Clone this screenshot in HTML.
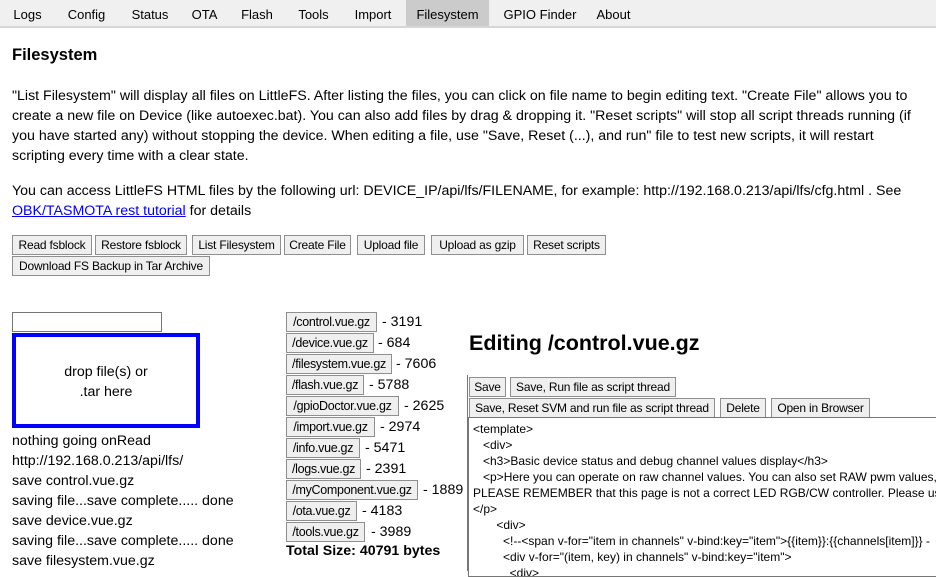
<!DOCTYPE html>
<html><head><meta charset="utf-8"><style>
*{box-sizing:border-box;margin:0;padding:0}
body{width:936px;height:571px;overflow:hidden;background:#fff;font-family:"Liberation Sans",sans-serif;color:#000;position:relative}
.a{position:absolute;white-space:nowrap}
.tabs{position:absolute;left:0;top:0;width:936px;height:28px;background:#f0f0f0;border-bottom:2px solid #d6d6d6}
.tab{position:absolute;top:0;height:26px;line-height:29px;font-size:13px;text-align:center}
.btn{position:absolute;height:20px;border:1px solid #8f8f8f;background:#efefef;font-size:12px;line-height:18px;text-align:center;white-space:nowrap;overflow:hidden;letter-spacing:-0.2px}
.t15{font-size:14.2px}
.fb{position:absolute;left:286px;height:20px;border:1px solid #8f8f8f;background:#efefef;font-size:12.5px;line-height:18px;text-align:center;white-space:nowrap;overflow:hidden;letter-spacing:-0.3px}
.fs{position:absolute;font-size:14.2px;line-height:20px;white-space:nowrap}
.code{position:absolute;left:468px;top:417px;width:480px;height:160px;border:1px solid #767676;font-size:12px;line-height:16px;padding:3px 4px;white-space:pre;overflow:hidden}
</style></head><body>
<div class="tabs">
<div class="tab" style="left:0;width:55px">Logs</div>
<div class="tab" style="left:55px;width:63px">Config</div>
<div class="tab" style="left:118px;width:64px">Status</div>
<div class="tab" style="left:182px;width:45px">OTA</div>
<div class="tab" style="left:227px;width:60px">Flash</div>
<div class="tab" style="left:287px;width:53px">Tools</div>
<div class="tab" style="left:340px;width:66px">Import</div>
<div class="tab" style="left:406px;width:83px;background:#cbcbcb">Filesystem</div>
<div class="tab" style="left:489px;width:102px">GPIO Finder</div>
<div class="tab" style="left:591px;width:45px">About</div>
</div>
<div class="a" style="left:12px;top:46px;font-size:16.5px;font-weight:bold">Filesystem</div>
<div class="a t15" style="left:12px;top:86px;line-height:20px">"List Filesystem" will display all files on LittleFS. After listing the files, you can click on file name to begin editing text. "Create File" allows you to<br>create a new file on Device (like autoexec.bat). You can also add files by drag &amp; dropping it. "Reset scripts" will stop all script threads running (if<br>you have started any) without stopping the device. When editing a file, use "Save, Reset (...), and run" file to test new scripts, it will restart<br>scripting every time with a clear state.</div>
<div class="a t15" style="left:12px;top:181px;line-height:20px">You can access LittleFS HTML files by the following url: DEVICE_IP/api/lfs/FILENAME, for example: http://192.168.0.213/api/lfs/cfg.html . See<br><span style="color:#0000ee;text-decoration:underline">OBK/TASMOTA rest tutorial</span> for details</div>
<div class="btn" style="left:12px;top:235px;width:80px">Read fsblock</div>
<div class="btn" style="left:95px;top:235px;width:92px">Restore fsblock</div>
<div class="btn" style="left:192px;top:235px;width:89px">List Filesystem</div>
<div class="btn" style="left:284px;top:235px;width:67px">Create File</div>
<div class="btn" style="left:357px;top:235px;width:68px">Upload file</div>
<div class="btn" style="left:431px;top:235px;width:93px">Upload as gzip</div>
<div class="btn" style="left:527px;top:235px;width:79px">Reset scripts</div>
<div class="btn" style="left:12px;top:256px;width:198px">Download FS Backup in Tar Archive</div>
<div class="a" style="left:12px;top:312px;width:150px;height:20px;border:1px solid #767676"></div>
<div class="a" style="left:12px;top:333px;width:188px;height:95px;border:4px solid #0000ff;font-size:14.2px;line-height:20px;text-align:center;padding-top:25px">drop file(s) or<br>.tar here</div>
<div class="a t15" style="left:12px;top:431px;line-height:20px">nothing going onRead<br>http://192.168.0.213/api/lfs/<br>save control.vue.gz<br>saving file...save complete..... done<br>save device.vue.gz<br>saving file...save complete..... done<br>save filesystem.vue.gz</div>
<div class="fb" style="top:312px;width:91px">/control.vue.gz</div><div class="fs" style="left:382px;top:312px">- 3191</div>
<div class="fb" style="top:333px;width:88px">/device.vue.gz</div><div class="fs" style="left:378px;top:333px">- 684</div>
<div class="fb" style="top:354px;width:106px">/filesystem.vue.gz</div><div class="fs" style="left:396px;top:354px">- 7606</div>
<div class="fb" style="top:375px;width:78px">/flash.vue.gz</div><div class="fs" style="left:369px;top:375px">- 5788</div>
<div class="fb" style="top:396px;width:113px">/gpioDoctor.vue.gz</div><div class="fs" style="left:404px;top:396px">- 2625</div>
<div class="fb" style="top:417px;width:89px">/import.vue.gz</div><div class="fs" style="left:380px;top:417px">- 2974</div>
<div class="fb" style="top:438px;width:74px">/info.vue.gz</div><div class="fs" style="left:365px;top:438px">- 5471</div>
<div class="fb" style="top:459px;width:75px">/logs.vue.gz</div><div class="fs" style="left:366px;top:459px">- 2391</div>
<div class="fb" style="top:480px;width:132px">/myComponent.vue.gz</div><div class="fs" style="left:423px;top:480px">- 1889</div>
<div class="fb" style="top:501px;width:71px">/ota.vue.gz</div><div class="fs" style="left:362px;top:501px">- 4183</div>
<div class="fb" style="top:522px;width:79px">/tools.vue.gz</div><div class="fs" style="left:371px;top:522px">- 3989</div>
<div class="a" style="left:286px;top:543px;font-size:14.2px;font-weight:bold">Total Size: 40791 bytes</div>
<div class="a" style="left:467px;top:375px;width:1px;height:196px;background:#767676"></div>
<div class="a" style="left:469px;top:331px;font-size:21.5px;font-weight:bold">Editing /control.vue.gz</div>
<div class="btn" style="left:469px;top:377px;width:37px">Save</div>
<div class="btn" style="left:510px;top:377px;width:166px">Save, Run file as script thread</div>
<div class="btn" style="left:469px;top:398px;width:246px">Save, Reset SVM and run file as script thread</div>
<div class="btn" style="left:720px;top:398px;width:46px">Delete</div>
<div class="btn" style="left:771px;top:398px;width:99px">Open in Browser</div>
<div class="code">&lt;template&gt;
   &lt;div&gt;
   &lt;h3&gt;Basic device status and debug channel values display&lt;/h3&gt;
   &lt;p&gt;Here you can operate on raw channel values. You can also set RAW pwm values, w
PLEASE REMEMBER that this page is not a correct LED RGB/CW controller. Please use ma
&lt;/p&gt;
       &lt;div&gt;
         &lt;!--&lt;span v-for="item in channels" v-bind:key="item"&gt;{{item}}:{{channels[item]}} -
         &lt;div v-for="(item, key) in channels" v-bind:key="item"&gt;
           &lt;div&gt;</div>
</body></html>
